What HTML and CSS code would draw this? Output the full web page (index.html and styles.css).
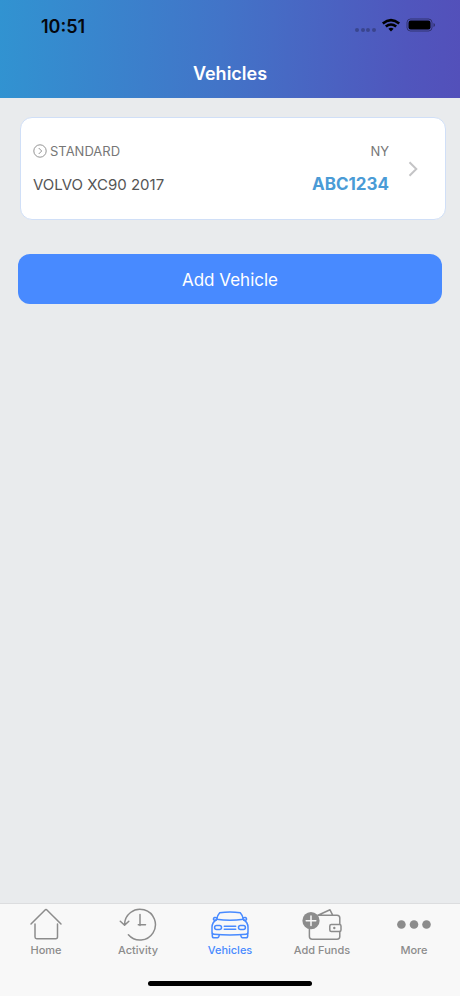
FILE: index.html
```
<!DOCTYPE html>
<html lang="en">
<head>
    <meta charset="UTF-8">
    <meta name="viewport" content="width=device-width, initial-scale=1.0">
    <title>Vehicles</title>
    <link rel="stylesheet" href="styles.css">
</head>
<body>
    <header class="header">
        <div class="status-bar">
            <span class="time">10:51</span>
            <svg class="status-icons" width="82" height="20" viewBox="0 0 82 20">
                <g fill="#000" opacity="0.25">
                    <circle cx="3" cy="14" r="2"/>
                    <circle cx="9" cy="14" r="2"/>
                    <circle cx="14" cy="14" r="2"/>
                    <circle cx="20" cy="14" r="2"/>
                </g>
                <g fill="none" stroke="#000" stroke-width="2.6">
                    <path d="M28.8 7.4Q37 .8 45.2 7.4"/>
                    <path d="M31.8 10.6Q37 6.4 42.2 10.6"/>
                </g>
                <path d="M34.4 12.7Q37 10.8 39.6 12.7L37 15.6z"/>
                <rect x="53" y="3" width="25" height="12" rx="3.5" fill="none" stroke="#000" stroke-opacity="0.4"/>
                <rect x="54.5" y="4.5" width="22" height="9" rx="2.2"/>
                <path d="M79.5 7v4q1.5-.5 1.5-2t-1.5-2z" opacity="0.45"/>
            </svg>
        </div>
        <h1>Vehicles</h1>
    </header>

    <main class="content">
        <a class="vehicle-card" href="#">
            <div class="vehicle-info">
                <div class="vehicle-row">
                    <span class="vehicle-type">
                        <svg width="14" height="14" viewBox="0 0 14 14" fill="none" stroke="#888" stroke-width="0.9">
                            <circle cx="7" cy="7" r="6.2"/>
                            <path d="M5.7 4l3 3-3 3"/>
                        </svg>
                        STANDARD
                    </span>
                    <span>NY</span>
                </div>
                <div class="vehicle-row">
                    <span class="vehicle-name">VOLVO XC90 2017</span>
                    <span class="plate">ABC1234</span>
                </div>
            </div>
            <svg width="10" height="16" viewBox="0 0 10 16" fill="none" stroke="#c4c4c6" stroke-width="2">
                <path d="M1.5 1.2L8.3 8l-6.8 6.8"/>
            </svg>
        </a>
        <button class="add-btn" type="button">Add Vehicle</button>
    </main>

    <nav class="tab-bar">
        <div class="tabs">
            <a class="tab" href="#">
                <svg width="44" height="34" viewBox="0 0 44 34">
                    <path d="M7 17L20.8 3.2q1.2-1.2 2.4 0L37 17M11 17v13q0 1.7 1.7 1.7h19q1.8 0 1.8-1.7V17"/>
                </svg>
                Home
            </a>
            <a class="tab" href="#">
                <svg width="44" height="34" viewBox="0 0 44 34">
                    <path d="M8.6 18A15.4 15.4 0 1 1 12.4 27.8M4.3 14.2l4.3 4.1 4.2-4.1M24 7.5V18.6M22.3 17.8h7.2"/>
                </svg>
                Activity
            </a>
            <a class="tab active" href="#">
                <svg width="44" height="34" viewBox="0 0 44 34">
                    <path d="M8.6 12.2Q9.8 7.8 11.7 5.8Q22 4.1 32.3 5.8Q34.2 7.8 35.4 12.2Q22 14.5 8.6 12.2z"/>
                    <path d="M8 13Q4.2 15.5 4 20v5.2q0 1.8 2 2Q22 28.6 38 27.2q2-.2 2-2V20Q39.8 15.5 36 13"/>
                    <path d="M8.2 13.2q-3.2.3-2.7-1.5t3.6-.8M35.8 13.2q3.2.3 2.7-1.5t-3.6-.8"/>
                    <path d="M4.3 26.5V29q0 1.8 1.8 1.8h3.3q1.6 0 1.9-3M39.7 26.5V29q0 1.8-1.8 1.8h-3.3q-1.6 0-1.9-3"/>
                    <rect x="6.6" y="18.4" width="6.9" height="4.2" rx="2"/>
                    <rect x="30.5" y="18.4" width="6.9" height="4.2" rx="2"/>
                    <path d="M16.3 19.3h11.4M16.3 22.3h11.4"/>
                </svg>
                Vehicles
            </a>
            <a class="tab" href="#">
                <svg width="44" height="34" viewBox="0 0 44 34">
                    <path d="M19 8.2h18q2.8 0 2.8 2.8v6.3M39.8 24.5v5q0 2.7-2.8 2.7H12.2q-2.8 0-2.8-2.7V22M18 8.2L30 2.8l2.7 5.4"/>
                    <rect x="29.8" y="17.4" width="11.2" height="7" rx="1.5"/>
                    <circle class="fill" cx="34.3" cy="21" r="1.2"/>
                    <circle class="fill" cx="11" cy="13.7" r="8.6"/>
                    <path class="plus" d="M11 8.9v9.6M6.2 13.7h9.6"/>
                </svg>
                Add Funds
            </a>
            <a class="tab" href="#">
                <svg width="44" height="34" viewBox="0 0 44 34">
                    <circle class="fill" cx="9.4" cy="17.5" r="4.3"/>
                    <circle class="fill" cx="22" cy="17.5" r="4.3"/>
                    <circle class="fill" cx="34.5" cy="17.5" r="4.3"/>
                </svg>
                More
            </a>
        </div>
        <div class="home-indicator"></div>
    </nav>
</body>
</html>
```
FILE: styles.css
```
* {
    box-sizing: border-box;
}
body {
    font-family: Inter, "Liberation Sans", sans-serif;
    margin: 0;
    min-height: 100vh;
    display: flex;
    flex-direction: column;
    background: #e9ebed;
}
a {
    color: inherit;
    text-decoration: none;
}
.header {
    background: linear-gradient(92deg, #3193d1 0%, #4274c8 48%, #5056bd 88%, #5350ba 100%);
}
.status-bar {
    display: flex;
    justify-content: space-between;
    align-items: center;
    height: 52px;
    padding: 0 24px 0 41px;
}
.time {
    font-size: 18px;
    font-weight: 600;
    color: #05070d;
}
.header h1 {
    margin: 0;
    height: 46px;
    line-height: 44px;
    font-size: 18px;
    font-weight: 600;
    text-align: center;
    color: #fff;
}
.content {
    flex: 1;
    padding: 19px 18px;
}
.vehicle-card {
    display: flex;
    align-items: center;
    gap: 19px;
    height: 103px;
    margin: 0 -4px 34px 2px;
    padding: 0 27px 0 12px;
    background: #fff;
    border: 1px solid #d0dff7;
    border-radius: 12px;
}
.vehicle-info {
    flex: 1;
    display: flex;
    flex-direction: column;
    gap: 12px;
    padding-bottom: 2px;
    font-size: 13px;
    color: #777;
}
.vehicle-row {
    display: flex;
    justify-content: space-between;
    align-items: center;
    line-height: 21px;
}
.vehicle-type {
    display: flex;
    align-items: center;
    gap: 3px;
}
.vehicle-name {
    font-size: 15px;
    color: #555;
}
.plate {
    font-size: 17px;
    font-weight: 700;
    color: #4a9bd6;
}
.add-btn {
    display: block;
    width: 100%;
    height: 50px;
    padding: 2px 0 0;
    border: none;
    border-radius: 12px;
    background: #488aff;
    color: #fff;
    font-family: inherit;
    font-size: 17px;
    cursor: pointer;
}
.tab-bar {
    background: #f8f8f8;
    border-top: 1px solid #dcdddf;
    padding: 3px 0 10px;
}
.tabs {
    display: grid;
    grid-template-columns: repeat(5, 1fr);
}
.tab {
    display: flex;
    flex-direction: column;
    align-items: center;
    font-size: 11px;
    line-height: 18px;
    font-weight: 500;
    color: #8c8c8c;
}
.tab.active {
    color: #488aff;
}
.tab svg {
    fill: none;
    stroke: currentColor;
    stroke-width: 1.5;
    stroke-linecap: round;
    stroke-linejoin: round;
}
.tab .fill {
    fill: currentColor;
    stroke: none;
}
.tab .plus {
    stroke: #f8f8f8;
}
.home-indicator {
    width: 164px;
    height: 5px;
    margin: 22px auto 0;
    border-radius: 3px;
    background: #000;
}
```
